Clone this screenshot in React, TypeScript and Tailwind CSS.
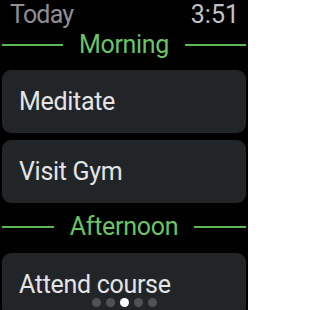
import { FC } from "react";

interface ITask {
  title: string;
}

const TaskCard: FC<ITask> = ({ title }) => (
  <div className="mx-[2px] flex h-[63px] shrink-0 items-center rounded-[9px] bg-[#222528] pl-[17px]">
    <span className="text-[25px] leading-[30px] tracking-[-0.3px] text-[#e4e4e6]">
      {title}
    </span>
  </div>
);

const SectionHeader: FC<{ label: string; className?: string }> = ({
  label,
  className,
}) => (
  <div className={`flex h-[30px] items-center gap-[16px] px-[2px] ${className ?? ""}`}>
    <div className="h-[2px] flex-1 bg-[#5fb858]" />
    <span className="text-[25px] leading-[30px] tracking-[-0.3px] text-[#6cc463]">
      {label}
    </span>
    <div className="h-[2px] flex-1 bg-[#5fb858]" />
  </div>
);

export default function App() {
  const dots = [false, false, true, false, false];

  return (
    <div className="relative flex h-[310px] w-[248px] flex-col overflow-hidden bg-black font-['Roboto',sans-serif]">
      <div className="flex h-[30px] shrink-0 items-center justify-between pl-[10px] pr-[9px] text-[25px] leading-[30px]">
        <span className="tracking-[-0.8px] text-[#8e8e93]">Today</span>
        <span className="text-[#c2c2c6]">3:51</span>
      </div>

      <SectionHeader label="Morning" className="mb-[10px] shrink-0" />
      <div className="flex shrink-0 flex-col gap-[7px]">
        <TaskCard title="Meditate" />
        <TaskCard title="Visit Gym" />
      </div>

      <SectionHeader label="Afternoon" className="mb-[11px] mt-[9px] shrink-0" />
      <TaskCard title="Attend course" />

      {/* page indicator */}
      <div className="absolute bottom-[3px] left-0 right-0 flex justify-center gap-[5px]">
        {dots.map((active, i) => (
          <div
            key={i}
            className={
              active
                ? "size-[9px] rounded-full bg-white"
                : "size-[9px] rounded-full bg-[#505153]"
            }
          />
        ))}
      </div>
    </div>
  );
}
